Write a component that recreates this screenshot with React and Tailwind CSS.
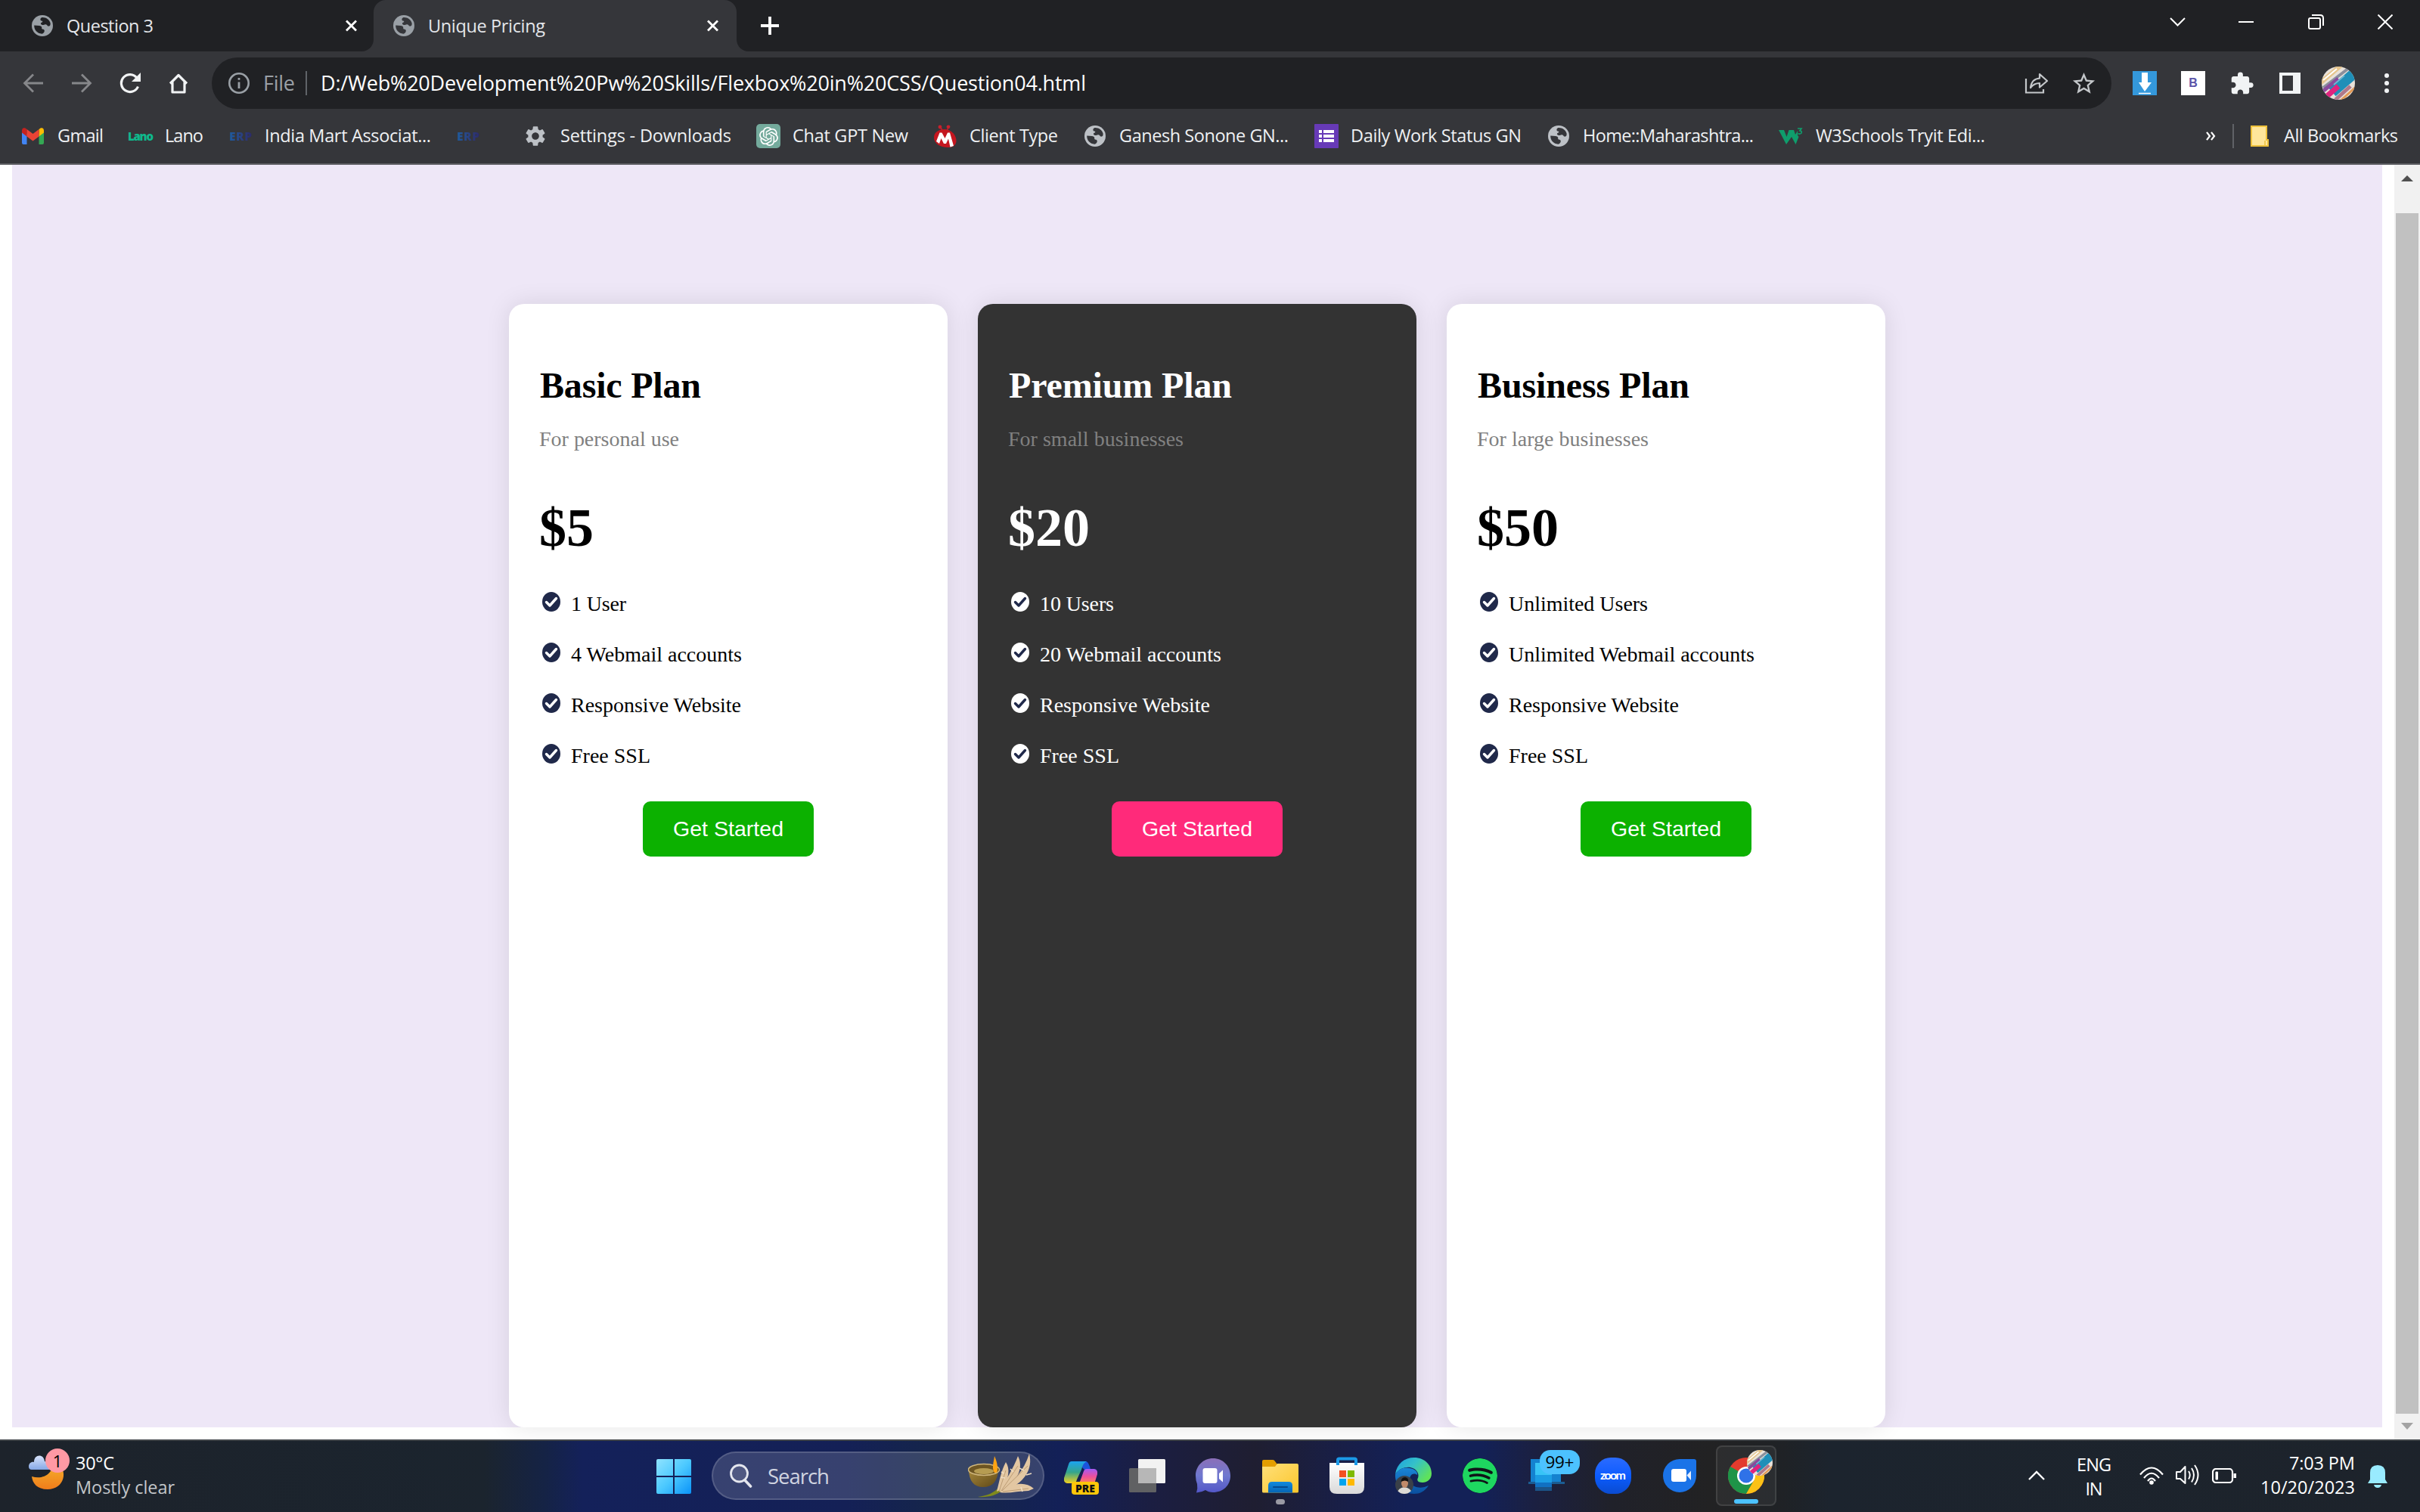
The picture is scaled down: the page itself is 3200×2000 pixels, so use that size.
import { useLayoutEffect, useRef, useState } from "react";
import { SiOpenai, SiSpotify } from "react-icons/si";
import { MdExtension, MdSettings, MdStarBorder } from "react-icons/md";

const UI = "font-['Open_Sans','Noto_Sans',sans-serif]";
const SERIF = "font-['Liberation_Serif',serif]";

// Sets the tracking of a single line so that it fills the given width.
function Fit({ w, className = "", children }) {
  const ref = useRef(null);
  const [spacing, setSpacing] = useState(0);
  useLayoutEffect(() => {
    const el = ref.current;
    el.style.letterSpacing = "0px";
    const natural = el.getBoundingClientRect().width;
    const s = (w - natural) / Math.max(1, el.textContent.length - 1);
    el.style.letterSpacing = `${s}px`;
    setSpacing(s);
  }, [w]);
  return (
    <span className={`block shrink-0 whitespace-nowrap ${className}`} style={{ width: w }}>
      <span ref={ref} className="inline-block" style={{ letterSpacing: spacing }}>
        {children}
      </span>
    </span>
  );
}

function Svg({ box, className, children }) {
  return (
    <svg viewBox={box} className={`block shrink-0 ${className}`} fill="none">
      {children}
    </svg>
  );
}

function Globe({ className, hole = "#202124" }) {
  return (
    <Svg box="0 0 28 28" className={`h-[28px] w-[28px] ${className}`}>
      <circle cx="14" cy="14" r="14" fill="currentColor" />
      <path d="M13 3.2C18 2.6 23 5.4 24.6 10.5 25 13 24 15 22 14.6 20 14.2 20.6 12.4 18.4 12.2 16.6 12 16 13.2 14 13 11.6 12.6 11.4 10.4 13 9.8 15 9 14.6 7.6 12.6 7.4 11 7 11 4 13 3.2Z" fill={hole} />
      <path d="M3.2 13.6L10 14C13 14.4 13.6 16 13.2 17.6 13 19 16.6 18.2 16.8 20.6 17 22.6 15.2 24.4 13.4 24.8 7.4 24.4 3 19.8 3.2 13.6Z" fill={hole} />
    </Svg>
  );
}

function CloseX({ className }) {
  return (
    <Svg box="0 0 16 16" className={className}>
      <path d="M1.5 1.5L14.5 14.5M14.5 1.5L1.5 14.5" stroke="#fff" strokeWidth="2.8" />
    </Svg>
  );
}

function PaintedAvatar({ className, id }) {
  return (
    <Svg box="0 0 44 44" className={className}>
      <defs>
        <clipPath id={id}>
          <circle cx="22" cy="22" r="22" />
        </clipPath>
      </defs>
      <g clipPath={`url(#${id})`}>
        <rect width="44" height="44" fill="#e9e2da" />
        <path d="M-2 22L26 -2" stroke="#e6c58c" strokeWidth="6" />
        <path d="M2 28L36 2" stroke="#8a8f9c" strokeWidth="4" />
        <path d="M14 34L44 8" stroke="#1f8fb8" strokeWidth="14" />
        <path d="M0 34L22 16" stroke="#8a4a9c" strokeWidth="5" />
        <path d="M6 40L22 26" stroke="#e0247f" strokeWidth="7" />
        <path d="M18 44L38 26" stroke="#b0788a" strokeWidth="5" />
        <path d="M24 46L44 28" stroke="#e39a55" strokeWidth="3" />
        <path d="M16 24L30 12" stroke="#6fb7d2" strokeWidth="2" />
        <path d="M2 18L20 3" stroke="#fff" strokeWidth="2" />
      </g>
    </Svg>
  );
}

function TabStrip() {
  return (
    <div className="flex h-[68px] bg-[#202124]">
      <div className="flex w-[478px] items-center">
        <Globe className="ml-[42px] text-[#9aa0a6]" />
        <Fit w={115} className="ml-[18px] text-[23.5px] leading-[66px] text-[#e4e6ea]">Question 3</Fit>
        <CloseX className="ml-[253px] h-[16px] w-[17px]" />
      </div>
      <Svg box="0 0 16 68" className="h-[68px] w-[16px]">
        <path d="M16 52V68H0C9 68 16 61 16 52Z" fill="#35363a" />
      </Svg>
      <div className="flex w-[480px] items-center rounded-t-[16px] bg-[#35363a]">
        <Globe className="ml-[26px] text-[#9aa0a6]" hole="#35363a" />
        <Fit w={155} className="ml-[18px] text-[23.5px] leading-[66px] text-[#e4e6ea]">Unique Pricing</Fit>
        <CloseX className="ml-[213px] h-[16px] w-[17px]" />
      </div>
      <Svg box="0 0 16 68" className="h-[68px] w-[16px]">
        <path d="M0 52V68H16C7 68 0 61 0 52Z" fill="#35363a" />
      </Svg>
      <Svg box="0 0 24 24" className="mt-[22px] ml-[16px] h-[24px] w-[24px]">
        <path d="M12 0V24M0 12H24" stroke="#fff" strokeWidth="3.8" />
      </Svg>
      <div className="ml-auto flex h-[58px] items-center pr-[36px]">
        <Svg box="0 0 21 12" className="h-[12px] w-[21px]">
          <path d="M1 1L10.500 10.500L20 1" stroke="#fff" strokeWidth="2" />
        </Svg>
        <div className="ml-[70px] h-[2px] w-[20px] bg-white" />
        <Svg box="0 0 21 20" className="ml-[72px] h-[20px] w-[21px]">
          <rect x="1" y="5" width="15" height="14" rx="2" stroke="#fff" strokeWidth="2" />
          <path d="M5 1H16C18.500 1 20 2.500 20 5V15" stroke="#fff" strokeWidth="2" />
        </Svg>
        <Svg box="0 0 20 20" className="ml-[71px] h-[20px] w-[20px]">
          <path d="M0.500 0.500L19.500 19.500M19.500 0.500L0.500 19.500" stroke="#fff" strokeWidth="2" />
        </Svg>
      </div>
    </div>
  );
}

function Toolbar() {
  return (
    <div className="flex h-[84px] items-center bg-[#35363a]">
      <Svg box="0 0 27 26" className="ml-[30px] h-[26px] w-[27px]">
        <path d="M27 13H3M14 1.500L2.500 13L14 24.500" stroke="#86878a" strokeWidth="2.800" />
      </Svg>
      <Svg box="0 0 27 26" className="ml-[38px] h-[26px] w-[27px]">
        <path d="M0 13H24M13 1.500L24.500 13L13 24.500" stroke="#86878a" strokeWidth="2.800" />
      </Svg>
      <Svg box="0 0 28 28" className="ml-[36px] h-[28px] w-[28px]">
        <path d="M24.500 18.500A11.500 11.500 0 1 1 23 7" stroke="#f1f3f4" strokeWidth="3.200" />
        <path d="M28 0V12H16Z" fill="#f1f3f4" />
      </Svg>
      <Svg box="0 0 26 27" className="ml-[37px] h-[27px] w-[26px]">
        <path d="M2 13.500L13 2.500L24 13.500M5 11V25H21V11" stroke="#f1f3f4" strokeWidth="3.200" strokeLinejoin="round" />
      </Svg>
      <div className="ml-[31px] flex h-[68px] w-[2512px] items-center rounded-full bg-[#202124]">
        <Svg box="0 0 28 28" className="ml-[22px] h-[28px] w-[28px]">
          <circle cx="14" cy="14" r="12.700" stroke="#9aa0a6" strokeWidth="2.600" />
          <path d="M14 12.500V21M14 7V9.800" stroke="#9aa0a6" strokeWidth="2.800" />
        </Svg>
        <Fit w={42} className="ml-[18px] text-[27px] leading-[66px] text-[#9aa0a6]">File</Fit>
        <div className="ml-[14px] h-[32px] w-[2px] bg-[#5f6368]" />
        <Fit w={1012} className="ml-[18px] text-[27px] leading-[66px] text-white">
          D:/Web%20Development%20Pw%20Skills/Flexbox%20in%20CSS/Question04.html
        </Fit>
        <Svg box="0 0 32 28" className="ml-auto h-[28px] w-[32px]">
          <path d="M2 8V26.500H25V22" stroke="#c4c7ca" strokeWidth="2.200" />
          <path d="M8 20C9 12 13 8 20 7.500V2L30 11L20 19.500V14C15 14 11 16 8 20Z" stroke="#c4c7ca" strokeWidth="2.200" strokeLinejoin="round" />
        </Svg>
        <MdStarBorder className="mr-[19px] ml-[29px] size-[35px] shrink-0 text-[#c4c7ca]" />
      </div>
      <Svg box="0 0 32 32" className="ml-[28px] h-[32px] w-[32px]">
        <rect width="32" height="32" fill="#3498db" />
        <path d="M12 2H20V15H25L16 27L8 15H12Z" fill="#fff" />
        <path d="M8 29.500H24" stroke="#fff" strokeWidth="1.500" />
      </Svg>
      <div className="ml-[32px] flex size-[32px] items-center justify-center bg-white font-['Liberation_Sans',sans-serif] text-[16px] leading-none font-bold text-[#5a54a8]">
        B
      </div>
      <MdExtension className="ml-[32px] size-[33px] shrink-0 text-[#f1f3f4]" />
      <Svg box="0 0 28 28" className="ml-[33px] h-[28px] w-[28px]">
        <path d="M0 0H28V28H0ZM4 4V24H18V4Z" fill="#f1f3f4" fillRule="evenodd" />
      </Svg>
      <PaintedAvatar id="profile" className="ml-[28px] size-[44px]" />
      <div className="ml-[39px] flex flex-col gap-[4px]">
        <div className="size-[6px] rounded-full bg-[#f1f3f4]" />
        <div className="size-[6px] rounded-full bg-[#f1f3f4]" />
        <div className="size-[6px] rounded-full bg-[#f1f3f4]" />
      </div>
    </div>
  );
}

const LABEL = "text-[23.5px] leading-[72px] -mt-[3px] text-[#eff1f3]";
const ERP = "bg-linear-to-r from-[#1d5c9e] to-[#2b2a6a] bg-clip-text text-[15.500px] leading-[32px] font-extrabold text-transparent";

function Bookmarks() {
  return (
    <div className="flex h-[64px] items-center bg-[#35363a] pb-[8px]">
      <Svg box="0 0 29 22" className="ml-[29px] h-[22px] w-[29px]">
        <path d="M0 3L6.500 8V22H2Q0 22 0 20Z" fill="#4285f4" />
        <path d="M29 3L22.500 8V22H27Q29 22 29 20Z" fill="#34a853" />
        <path d="M22.500 2L25 .3Q29 -.5 29 4V6.500L22.500 11.500Z" fill="#fbbc04" />
        <path d="M6.500 2L4 .3Q0 -.5 0 4V6.500L6.500 11.500Z" fill="#c5221f" />
        <path d="M6.500 2L14.500 8L22.500 2V11.500L14.500 17.500L6.500 11.500Z" fill="#ea4335" />
      </Svg>
      <Fit w={61} className={`ml-[18px] ${LABEL}`}>Gmail</Fit>
      <Fit w={34} className="ml-[32px] text-[15px] leading-[32px] font-extrabold text-[#0fb98c]">Lano</Fit>
      <Fit w={51} className={`ml-[15px] ${LABEL}`}>Lano</Fit>
      <Fit w={30} className={`ml-[34px] ${ERP}`}>ERP</Fit>
      <Fit w={220} className={`ml-[17px] ${LABEL}`}>India Mart Associat...</Fit>
      <Fit w={30} className={`ml-[34px] ${ERP}`}>ERP</Fit>
      <MdSettings className="ml-[58px] size-[32px] shrink-0 text-[#bdc1c6]" />
      <Fit w={226} className={`ml-[17px] ${LABEL}`}>Settings - Downloads</Fit>
      <div className="ml-[33px] flex size-[32px] shrink-0 items-center justify-center rounded-[5px] bg-[#74aa9c]">
        <SiOpenai className="size-[25px] text-white" />
      </div>
      <Fit w={153} className={`ml-[16px] ${LABEL}`}>Chat GPT New</Fit>
      <Svg box="0 0 32 30" className="ml-[33px] h-[30px] w-[32px]">
        <circle cx="9" cy="3" r="2.400" fill="#c8202c" />
        <circle cx="20" cy="2.800" r="2.400" fill="#c8202c" />
        <path d="M10 4L12.500 8M20 4L18 8" stroke="#c8202c" strokeWidth="1.500" />
        <path d="M15 6C24 6 31 14 30.500 22C30 27 26 30 20 30C8 30 1 24 1 17C1 10 7 6 15 6Z" fill="#c4161f" />
        <path d="M4 22L8.500 10.500H11.500L15.500 18L19 10.500H22L27 28L22.500 29.500L20 18.500L17 25H14L10.500 18L8 25Z" fill="#fff" />
      </Svg>
      <Fit w={117} className={`ml-[16px] ${LABEL}`}>Client Type</Fit>
      <Globe className="ml-[35px] text-[#bdc1c6]" hole="#35363a" />
      <Fit w={224} className={`ml-[18px] ${LABEL}`}>Ganesh Sonone GN...</Fit>
      <Svg box="0 0 32 32" className="ml-[34px] h-[32px] w-[32px]">
        <rect width="32" height="32" rx="1" fill="#673ab7" />
        <path d="M6 8H10V12H6ZM12 8H26V12H12ZM6 14H10V18H6ZM12 14H26V18H12ZM6 20H10V24H6ZM12 20H26V24H12Z" fill="#fff" />
      </Svg>
      <Fit w={226} className={`ml-[16px] ${LABEL}`}>Daily Work Status GN</Fit>
      <Globe className="ml-[35px] text-[#bdc1c6]" hole="#35363a" />
      <Fit w={226} className={`ml-[18px] ${LABEL}`}>Home::Maharashtra...</Fit>
      <Svg box="0 0 32 22" className="ml-[33px] h-[22px] w-[32px]">
        <path d="M0 3H7L10.500 12L13.500 3H20L22 9L25 4V10L26.500 12L22.500 22L17 12L10 22Z" fill="#0f9d6c" />
        <path d="M25 1H30L28 3.800Q31 4 30 7Q28 9 25.500 7.500" stroke="#0f9d6c" strokeWidth="1.700" />
      </Svg>
      <Fit w={224} className={`ml-[17px] ${LABEL}`}>W3Schools Tryit Edi...</Fit>
      <Svg box="0 0 13 12" className="ml-auto h-[12px] w-[13px]">
        <path d="M1 .8L5 6L1 11.200M7 .8L11 6L7 11.200" stroke="#fff" strokeWidth="2.200" />
      </Svg>
      <div className="ml-[22px] h-[32px] w-[2px] bg-[#606267]" />
      <Svg box="0 0 24 28" className="ml-[22px] h-[28px] w-[24px]">
        <path d="M1 1H21V19H23V27H1Z" fill="#ffe69b" stroke="#eec13b" strokeWidth="2" />
        <path d="M19 20V27" stroke="#eec13b" strokeWidth="1.500" />
      </Svg>
      <Fit w={151} className={`mr-[29px] ml-[20px] ${LABEL}`}>All Bookmarks</Fit>
    </div>
  );
}

const PLANS = [
  {
    name: "Basic Plan", nameW: 213, note: "For personal use", noteW: 185, price: "$5",
    features: [["1 User", 73], ["4 Webmail accounts", 226], ["Responsive Website", 225], ["Free SSL", 105]],
  },
  {
    name: "Premium Plan", nameW: 295, note: "For small businesses", noteW: 232, price: "$20", dark: true,
    features: [["10 Users", 98], ["20 Webmail accounts", 240], ["Responsive Website", 225], ["Free SSL", 105]],
  },
  {
    name: "Business Plan", nameW: 280, note: "For large businesses", noteW: 227, price: "$50",
    features: [["Unlimited Users", 184], ["Unlimited Webmail accounts", 325], ["Responsive Website", 225], ["Free SSL", 105]],
  },
];

function PlanCard({ plan }) {
  const dark = plan.dark;
  return (
    <div className={`flex w-[580px] flex-col rounded-[20px] px-[40px] shadow-[0_0_32px_rgba(0,0,0,0.1)] ${dark ? "bg-[#333333] text-white" : "bg-white text-black"} ${SERIF}`}>
      <Fit w={plan.nameW} className="mt-[80px] ml-px text-[48px] leading-[56px] font-bold">{plan.name}</Fit>
      <Fit w={plan.noteW} className="mt-[27px] text-[28px] leading-[32px] text-[#808080]">{plan.note}</Fit>
      <div className="mt-[61px] text-[72px] leading-[80px] font-bold">{plan.price}</div>
      <div className="mt-[27px]">
        {plan.features.map(([text, w]) => (
          <div key={text} className="flex h-[67px] items-center">
            <Svg box="0 0 24 26" className="-mt-[5px] ml-[4px] h-[26px] w-[24px]">
              <ellipse cx="12" cy="13" rx="12" ry="13" fill={dark ? "#ffffff" : "#20294a"} />
              <path d="M5.500 13.500L10 18L18.500 8.500" stroke={dark ? "#20294a" : "#ffffff"} strokeWidth="3.400" strokeLinecap="round" strokeLinejoin="round" />
            </Svg>
            <Fit w={w} className="ml-[14px] text-[28px] leading-[34px]">{text}</Fit>
          </div>
        ))}
      </div>
      <button className={`mx-auto mt-[27px] flex h-[73px] w-[226px] items-center justify-center rounded-[10px] pb-px font-['Liberation_Sans',sans-serif] text-[28.500px] leading-[34px] text-white ${dark ? "bg-[#ff2a7a]" : "bg-[#0cb100]"}`}>
        <Fit w={146}>Get Started</Fit>
      </button>
    </div>
  );
}

function Page() {
  return (
    <div className="flex h-[1686px] overflow-hidden bg-white">
      <div className="ml-[16px] flex h-[1670px] w-[3134px] justify-center gap-[40px] bg-[#eee7f7] pt-[184px]">
        {PLANS.map((p) => (
          <PlanCard key={p.name} plan={p} />
        ))}
      </div>
      <div className="ml-[16px] flex w-[34px] flex-col items-center bg-[#f1f1f1]">
        <Svg box="0 0 16 8" className="mt-[14px] h-[8px] w-[16px]">
          <path d="M0 8L8 0L16 8Z" fill="#505050" />
        </Svg>
        <div className="mt-[42px] h-[1588px] w-[30px] bg-[#c1c1c1]" />
        <Svg box="0 0 16 9" className="mt-[12px] h-[9px] w-[16px]">
          <path d="M0 0H16L8 9Z" fill="#a3a3a3" />
        </Svg>
      </div>
    </div>
  );
}

function DiyaArt() {
  return (
    <Svg box="0 0 88 58" className="ml-[183px] h-[58px] w-[88px]">
      <defs>
        <linearGradient id="bowl" x1="0" y1="0" x2="1" y2="1">
          <stop offset="0" stopColor="#a98a3d" />
          <stop offset="1" stopColor="#5d4717" />
        </linearGradient>
      </defs>
      <path d="M1 20C1 36 8 44 20 44C33 44 39 36 40 22Z" fill="url(#bowl)" />
      <ellipse cx="21" cy="21" rx="20.500" ry="7.500" fill="#6d5522" stroke="#cfb67c" strokeWidth="1.500" />
      <ellipse cx="21" cy="23" rx="13" ry="4" fill="#b69c52" />
      <path d="M35 25C31 18 34 12 35 3C39 12 40 20 38 25Z" fill="#ffa414" />
      <path d="M13 57C26 55 34 52 40 45L46 48C38 55 26 58 13 57Z" fill="#7f8a1c" />
      <g fill="#e3c7a2">
        <path d="M38 50C42 34 44 22 50 11C56 20 54 32 46 46Z" />
        <path d="M41 50C50 34 60 20 66 3C73 16 68 34 48 48Z" />
        <path d="M42 50C60 38 74 22 81 0C86 20 76 38 46 51Z" />
        <path d="M42 51C58 38 76 36 87 46L80 49C66 49 54 53 42 51Z" />
      </g>
      <path d="M41 50L50 22M44 49L66 16M45 49L79 16M46 50L80 46" stroke="#b8976f" strokeWidth="0.900" />
      <path d="M48 26L44 24M49 32L43 31M60 24L56 20M74 22L68 19M77 28L84 26M70 44L72 50" stroke="#efdcc2" strokeWidth="1.600" />
    </Svg>
  );
}

function Gradient({ id, stops, x2 = 0, y2 = 1 }) {
  return (
    <linearGradient id={id} x1="0" y1="0" x2={x2} y2={y2}>
      {stops.map((c, i) => (
        <stop key={c} offset={i / (stops.length - 1)} stopColor={c} />
      ))}
    </linearGradient>
  );
}

function Taskbar() {
  return (
    <div className="flex h-[96px] items-start border-t-2 border-[#414549] bg-[linear-gradient(90deg,#1d232b_0px,#1b242e_640px,#152345_720px,#14215a_770px,#142056_1120px,#15254b_1230px,#15254c_1300px,#132057_1400px,#1b1e42_1520px,#1f1e31_1660px,#171f4c_1800px,#132157_1860px,#132157_1960px,#1b2041_2030px,#20212a_2130px,#222223_2260px,#1f2226_2360px,#1c242e_2420px,#1d232b_3200px)]">
      <div className="relative mt-[10px] ml-[36px] h-[56px] w-[58px] shrink-0">
        <Svg box="0 0 58 56" className="h-[56px] w-[58px]">
          <defs>
            <Gradient id="moon" stops={["#f5b82e", "#f07c1b"]} />
            <Gradient id="cloud" stops={["#d7e3fb", "#86a8e6"]} />
          </defs>
          <path d="M40 20C54 28 50 54 27 54C13 54 7 46 6 37C22 42 36 32 34 16Z" fill="url(#moon)" />
          <path d="M2 24C2 19 6 17 9 18C9 7 22 7 23 17C28 18 31 22 29 28H6C3 28 2 26 2 24Z" fill="url(#cloud)" />
        </Svg>
        <div className="absolute top-0 left-[24px] flex size-[32px] items-center justify-center rounded-full bg-[#ff99a4] text-[22px] leading-none text-black">1</div>
      </div>
      <div className="mt-[13px] ml-[6px] w-[151px] shrink-0 text-[23.500px] leading-[32px]">
        <Fit w={51} className="text-white">30°C</Fit>
        <Fit w={131} className="text-[#c3c6c9]">Mostly clear</Fit>
      </div>
      <Svg box="0 0 46 46" className="mt-[24px] ml-[617px] h-[46px] w-[46px]">
        <defs>
          <Gradient id="win" x2={1} stops={["#8fe3ff", "#4cc9ff", "#0a93f8"]} />
        </defs>
        <path d="M2 0H22V22H0V2Q0 0 2 0ZM24 0H44Q46 0 46 2V22H24ZM0 24H22V46H2Q0 46 0 44ZM24 24H46V44Q46 46 44 46H24Z" fill="url(#win)" />
      </Svg>
      <div className="mt-[14px] ml-[27px] flex h-[64px] w-[440px] shrink-0 items-center rounded-full border-2 border-white/15 bg-white/15">
        <Svg box="0 0 30 32" className="ml-[22px] h-[32px] w-[30px]">
          <circle cx="12.500" cy="13" r="11" stroke="#e4e6ee" strokeWidth="2.800" fill="#ffffff20" />
          <path d="M20 22L27.500 30" stroke="#e4e6ee" strokeWidth="3.600" strokeLinecap="round" />
        </Svg>
        <Fit w={82} className="mt-[2px] ml-[20px] text-[27.500px] leading-[56px] text-[#d0d4e0]">Search</Fit>
        <DiyaArt />
      </div>
      <Svg box="0 0 46 44" className="mt-[27px] ml-[26px] h-[44px] w-[46px]">
        <defs>
          <Gradient id="copA" stops={["#1ba4f2", "#36a58b", "#f2d01f"]} />
          <Gradient id="copB" stops={["#a45af5", "#ee4f9b", "#ff8a55"]} />
        </defs>
        <path d="M24 0H29Q33 1 35 11H27L22 6Z" fill="#1b54dc" />
        <path d="M10 0H30Q25 2 23 11L17 24Q16 29 12 29H4Q-1 28 0 22L6 4Q7 0 10 0Z" fill="url(#copA)" />
        <path d="M30 10H40Q45 11 44 17L40 30H16Q21 29 22 24L26 13Q27 10 30 10Z" fill="url(#copB)" />
        <rect x="10" y="27" width="36" height="17" rx="4" fill="#ffc60a" />
        <text x="28" y="41" textAnchor="middle" fontFamily="Open Sans" fontWeight="800" fontSize="14" fill="#111" textLength="26">PRE</text>
      </Svg>
      <Svg box="0 0 48 44" className="mt-[24px] ml-[40px] h-[44px] w-[48px]">
        <rect x="12" y="0" width="36" height="32" rx="1.500" fill="#f2f2f2" />
        <rect x="0" y="12" width="36" height="32" rx="1.500" fill="#606163" />
        <rect x="12" y="12" width="24" height="20" fill="#b7b7b7" />
      </Svg>
      <Svg box="0 0 46 46" className="mt-[23px] ml-[40px] h-[46px] w-[46px]">
        <defs>
          <Gradient id="chat" stops={["#8b6fb8", "#6f78cf", "#5357c8"]} />
        </defs>
        <path d="M23 0C36 0 46 10 46 23C46 36 36 45 23 45Q17 45 13 42Q8 45 1 45.500Q3 40 2 34Q0 29 0 23C0 10 10 0 23 0Z" fill="url(#chat)" />
        <rect x="9.500" y="13" width="19" height="20" rx="3" fill="#fff" />
        <path d="M31 20L36 15.500V31.500L31 27Z" fill="#fff" />
      </Svg>
      <div className="mt-[25px] ml-[42px] flex shrink-0 flex-col items-center">
        <Svg box="0 0 48 44" className="h-[44px] w-[48px]">
          <defs>
            <Gradient id="fold" stops={["#ffe07a", "#fbc62c"]} x2={1} />
            <Gradient id="foldb" stops={["#118add", "#0564b5"]} />
          </defs>
          <path d="M0 2Q0 0 2 0H14Q16 0 17 2L20 6V12H0Z" fill="#e39e00" />
          <path d="M0 9H17L20 5H46Q48 5 48 7V42Q48 43.500 46 43.500H2Q0 43.500 0 42Z" fill="url(#fold)" />
          <path d="M8 43.500V34Q8 29 13 29H35Q40 29 40 34V43.500Z" fill="url(#foldb)" />
          <path d="M15 36H33" stroke="#054b8f" strokeWidth="2" strokeLinecap="round" />
        </Svg>
        <div className="mt-[8px] h-[7px] w-[12px] rounded-full bg-[#9a9aa4]" />
      </div>
      <Svg box="0 0 46 49" className="mt-[21px] ml-[41px] h-[49px] w-[46px]">
        <defs>
          <Gradient id="bag" stops={["#ffffff", "#d9d9d9"]} />
        </defs>
        <path d="M0 8H46V40Q46 49 36 49H10Q0 49 0 40Z" fill="url(#bag)" />
        <path d="M11 11V4Q11 2.500 13 2.500H33Q35 2.500 35 4V11" stroke="#1b9ae8" strokeWidth="4" />
        <path d="M13 18H22V27H13Z" fill="#f25022" />
        <path d="M24 18H33V27H24Z" fill="#7fba00" />
        <path d="M13 29H22V38H13Z" fill="#00a4ef" />
        <path d="M24 29H33V38H24Z" fill="#ffb900" />
      </Svg>
      <Svg box="0 0 48 48" className="mt-[22px] ml-[41px] h-[48px] w-[48px]">
        <defs>
          <Gradient id="edgeA" x2={1} y2={0.6} stops={["#1c9fe0", "#35c1c9", "#5fe25a"]} />
          <Gradient id="edgeB" stops={["#1a86d6", "#0a4f9e"]} />
          <clipPath id="face">
            <circle cx="12" cy="36" r="12" />
          </clipPath>
        </defs>
        <path d="M0 22C2 8 12 0 25 0C39 0 48 10 48 21C48 29 42 33 36 33C30 33 28 30 30 27C32 22 29 15 20 13C11 12 4 16 0 22Z" fill="url(#edgeA)" />
        <path d="M0 22C4 15 12 12 19 14C26 15 30 19 29 23C22 18 17 26 20 33C24 41 36 41 44 37C39 45 32 48 25 48C10 48 -1 36 0 22Z" fill="url(#edgeB)" />
        <g clipPath="url(#face)">
          <rect y="24" width="24" height="24" fill="#3a4048" />
          <path d="M2 49Q3 40 12 39Q21 40 23 49Z" fill="#dcdad6" />
          <ellipse cx="12.500" cy="34" rx="4.500" ry="6" fill="#c08a6a" />
          <path d="M7.500 32Q8 26 13 26Q18 27 17 32Q13 29 7.500 32Z" fill="#111" />
        </g>
      </Svg>
      <SiSpotify className="mt-[23px] ml-[41px] size-[46px] shrink-0 rounded-full bg-[#101418] text-[#1ed760]" />
      <div className="relative mt-[11px] ml-[41px] h-[60px] w-[68px] shrink-0">
        <Svg box="0 0 48 44" className="mt-[13px] h-[44px] w-[48px]">
          <rect x="3" y="0" width="40" height="31" fill="#1482d0" />
          <rect x="0" y="30" width="48" height="3" fill="#1b5c92" />
          <rect x="9" y="5" width="22" height="37" fill="#1171c2" />
          <rect x="9" y="5" width="22" height="16" fill="#38c4f6" />
          <rect x="9" y="21" width="22" height="10" fill="#1b9de4" />
          <rect x="9" y="37" width="22" height="5" fill="#1b5488" />
        </Svg>
        <div className="absolute top-[1px] left-[15px] flex h-[32px] w-[53px] items-center justify-center rounded-[14px] bg-[#4cc2ff] text-[22.500px] leading-[30px] text-black">
          <Fit w={38}>99+</Fit>
        </div>
      </div>
      <div className="mt-[22px] ml-[20px] flex size-[48px] shrink-0 items-center justify-center rounded-[21px] bg-linear-to-b from-[#2a6bff] via-[#0b5cff] to-[#0a4bd0] pb-[3px] font-['Lato',sans-serif] text-[16px] leading-none font-bold text-white">
        <Fit w={34}>zoom</Fit>
      </div>
      <Svg box="0 0 44 44" className="mt-[24px] ml-[42px] h-[44px] w-[44px]">
        <path d="M22 0H41Q44 0 44 3V22A22 22 0 1 1 22 0Z" fill="#1a73e8" />
        <rect x="11" y="13" width="20" height="17" rx="3" fill="#fff" />
        <path d="M31.500 21.500L37 15.500V28Z" fill="#e8effc" />
      </Svg>
      <div className="relative mt-[6px] ml-[26px] flex h-[80px] w-[80px] shrink-0 flex-col items-center rounded-[8px] border-2 border-white/10 bg-white/5">
        <Svg box="0 0 48 48" className="mt-[14px] h-[48px] w-[48px]">
          <circle cx="24" cy="24" r="24" fill="#e33b2e" />
          <path d="M24 24L3.200 12A24 24 0 0 0 24 48L34.400 30Z" fill="#1e9448" />
          <path d="M24 48A24 24 0 0 0 44.800 12H24L34.400 30Z" fill="#fbc116" />
          <circle cx="24" cy="24" r="12" fill="#fff" />
          <circle cx="24" cy="24" r="9.500" fill="#2f72e8" />
        </Svg>
        <div className="mt-[7px] h-[6px] w-[32px] rounded-full bg-[#4cc2ff]" />
        <PaintedAvatar id="badge" className="absolute top-[4px] left-[39px] size-[34px]" />
      </div>
      <div className="ml-auto flex">
        <Svg box="0 0 22 13" className="mt-[39px] h-[13px] w-[22px]">
          <path d="M1 12L11 2L21 12" stroke="#fff" strokeWidth="2.400" />
        </Svg>
        <div className="mt-[15px] ml-[42px] flex w-[46px] flex-col items-center text-[23.500px] leading-[32px] text-white">
          <Fit w={46}>ENG</Fit>
          <Fit w={23}>IN</Fit>
        </div>
        <Svg box="0 0 32 25" className="mt-[33px] ml-[37px] h-[25px] w-[32px]">
          <path d="M1 11.500Q16 -6.500 31 11.500M6 16Q16 3.500 26 16M11 20Q16 13 21 20" stroke="#fff" strokeWidth="2.200" />
          <circle cx="16" cy="22" r="2.800" fill="#fff" />
        </Svg>
        <Svg box="0 0 32 28" className="mt-[31px] ml-[16px] h-[28px] w-[32px]">
          <path d="M1 10H6L12.500 3V25L6 19H1Z" stroke="#fff" strokeWidth="2" strokeLinejoin="round" />
          <path d="M17 9Q20.500 14 17 19.500M21 5Q27 14 21 23.500M25 1Q34 14 25 27" stroke="#fff" strokeWidth="2" />
        </Svg>
        <Svg box="0 0 32 20" className="mt-[36px] ml-[16px] h-[20px] w-[32px]">
          <rect x="1" y="1" width="26" height="18" rx="4" stroke="#fff" strokeWidth="2.200" />
          <rect x="4.500" y="4.500" width="3.500" height="11" rx="1" fill="#fff" />
          <path d="M28.500 7H32V13H28.500Z" fill="#fff" />
        </Svg>
        <div className="mt-[13px] ml-[32px] flex w-[125px] flex-col items-end text-[23.500px] leading-[32px] text-white">
          <Fit w={87}>7:03 PM</Fit>
          <Fit w={125}>10/20/2023</Fit>
        </div>
        <Svg box="0 0 26 30" className="mt-[32px] mr-[43px] ml-[17px] h-[30px] w-[26px]">
          <path d="M3 19V10Q3 0 13 0T23 10V19L26 24H0Z" fill="#99ebff" />
          <path d="M8 26H18Q17 30 13 30T8 26Z" fill="#99ebff" />
        </Svg>
      </div>
    </div>
  );
}

export default function App() {
  return (
    <div className={`h-[2000px] w-[3200px] overflow-hidden ${UI}`}>
      <TabStrip />
      <Toolbar />
      <Bookmarks />
      <div className="h-[2px] bg-[#5d5e62]" />
      <Page />
      <Taskbar />
    </div>
  );
}
